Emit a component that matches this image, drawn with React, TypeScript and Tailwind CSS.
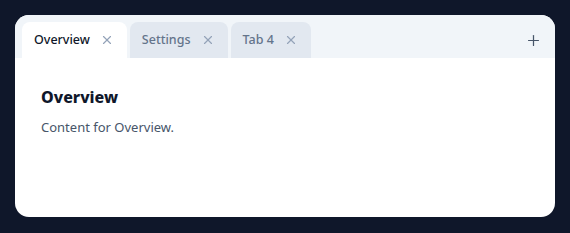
import { useState } from 'react';
import { Plus, X } from 'lucide-react';

const font = { fontFamily: '"Noto Sans", "Open Sans", sans-serif' };

export default function App() {
  const [tabs] = useState(['Overview', 'Settings', 'Tab 4']);
  const [active, setActive] = useState('Overview');

  return (
    <div className="min-h-screen bg-[#0f172a] p-[15px]" style={font}>
      <div className="w-[540px] h-[202px] bg-white rounded-[14px] overflow-hidden flex flex-col">
        <div className="h-[43px] bg-[#f1f5f9] flex items-end pl-[7px] pr-[10px]">
          <div className="flex items-end gap-[3px] flex-1">
            {tabs.map((t) => {
              const on = t === active;
              return (
                <button
                  key={t}
                  onClick={() => setActive(t)}
                  className={`h-9 flex items-center gap-[10px] pl-3 pr-[13px] rounded-t-lg text-[12.5px] font-medium ${
                    on ? 'bg-white text-[#0f172a]' : 'bg-[#e2e8f0] text-[#64748b]'
                  }`}
                >
                  {t}
                  <X size={14} strokeWidth={2} className="text-[#94a3b8]" />
                </button>
              );
            })}
          </div>
          <button className="h-9 w-6 flex items-center justify-center text-[#475569]">
            <Plus size={17} strokeWidth={1.75} />
          </button>
        </div>
        <div className="pt-[27px] px-[26px]">
          <h2 className="text-base font-extrabold text-[#0f172a] leading-6">{active}</h2>
          <p className="mt-2 text-[13px] text-[#475569] leading-5">Content for {active}.</p>
        </div>
      </div>
    </div>
  );
}
